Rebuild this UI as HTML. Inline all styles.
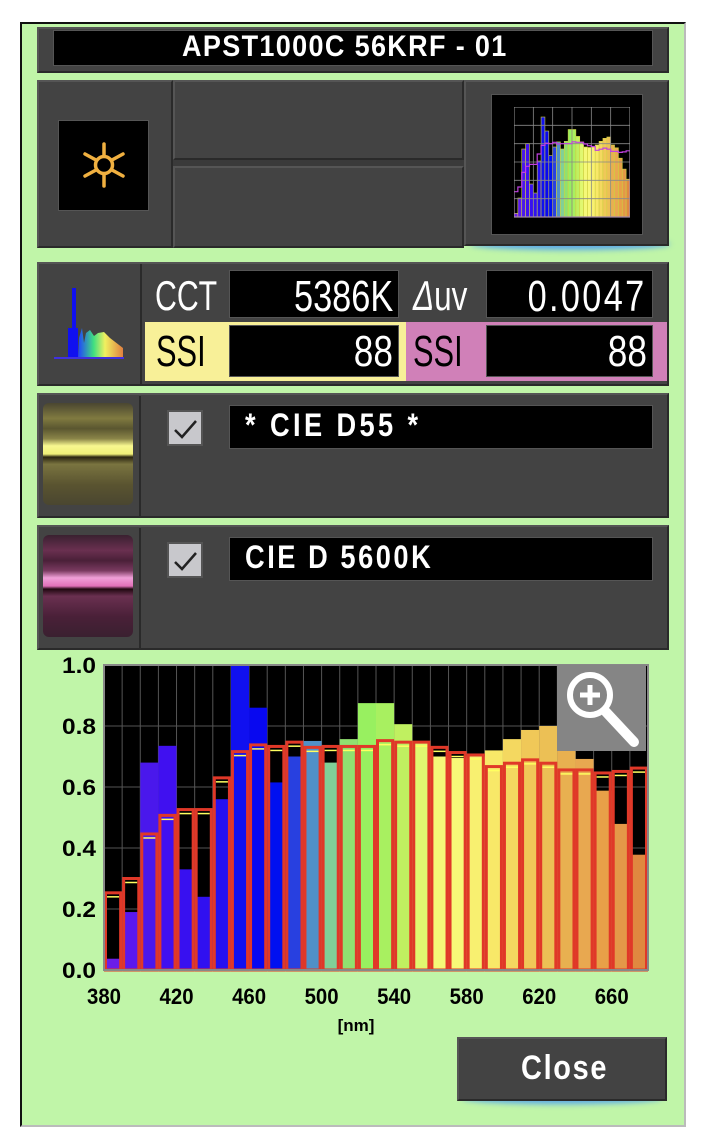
<!DOCTYPE html>
<html><head><meta charset="utf-8">
<style>
*{margin:0;padding:0;box-sizing:border-box}
body{width:702px;height:1148px;background:#fff;position:relative;overflow:hidden;font-family:"Liberation Sans",sans-serif}
.abs{position:absolute}
#panel{left:20px;top:22px;width:666px;height:1105px;background:#c0f5a8;border-left:2px solid #111;border-top:2px solid #111;border-right:2px solid #bbb;border-bottom:2px solid #bbb}
.dk{background:#434343;border:2px solid #2a2a2a;border-top-color:#555;border-left-color:#555}
.blk{background:#000;border:1px solid #555}
.t{color:#fff;font-weight:bold;white-space:nowrap;transform-origin:left center;display:inline-block}
.r{transform-origin:right center;text-align:right}
.cb{background:#c8c8cc;border:2px solid #555;width:36px;height:36px}
</style></head><body>
<div id="panel" class="abs"></div>

<!-- title -->
<div class="abs dk" style="left:37px;top:27px;width:632px;height:46px"></div>
<div class="abs blk" style="left:53px;top:30px;width:600px;height:36px"></div>
<div class="abs t" style="left:182px;top:30px;font-size:30px;letter-spacing:1.5px;transform:scaleX(0.9)">APST1000C 56KRF - 01</div>

<!-- section 2 -->
<div class="abs dk" style="left:37px;top:80px;width:136px;height:168px"></div>
<div class="abs blk" style="left:58px;top:120px;width:91px;height:91px"></div>
<svg class="abs" style="left:80px;top:141px" width="48" height="48" viewBox="0 0 48 48">
<g stroke="#f0b040" stroke-width="3.5" fill="none" stroke-linecap="round">
<circle cx="24" cy="24" r="8.5"/>
<line x1="24" y1="3" x2="24" y2="15"/><line x1="24" y1="33" x2="24" y2="45"/>
<line x1="5" y1="13" x2="16" y2="19"/><line x1="32" y1="29" x2="43" y2="35"/>
<line x1="5" y1="35" x2="16" y2="29"/><line x1="32" y1="19" x2="43" y2="13"/>
</g></svg>
<div class="abs" style="left:173px;top:80px;width:291px;height:168px;background:#3a3a3a"></div>
<div class="abs dk" style="left:173px;top:80px;width:291px;height:80px"></div>
<div class="abs dk" style="left:173px;top:166px;width:291px;height:82px"></div>
<div class="abs" style="left:470px;top:238px;width:200px;height:12px;background:#5aa8e8;border-radius:50%;filter:blur(3px)"></div>
<div class="abs dk" style="left:464px;top:80px;width:205px;height:166px"></div>
<div class="abs blk" style="left:491px;top:94px;width:152px;height:141px"></div>
<svg class="abs" style="left:514px;top:107px" width="116" height="112" id="mini"></svg>

<!-- section 3 -->
<div class="abs dk" style="left:37px;top:262px;width:632px;height:124px"></div>
<div class="abs" style="left:140px;top:264px;width:2px;height:120px;background:#2a2a2a"></div>
<svg class="abs" style="left:52px;top:288px" width="74" height="72" viewBox="0 0 74 72">
<defs><linearGradient id="sg" x1="0" x2="1"><stop offset="0" stop-color="#2040ff"/><stop offset=".35" stop-color="#40e080"/><stop offset=".6" stop-color="#f0f060"/><stop offset="1" stop-color="#e08040"/></linearGradient></defs>
<path d="M26 70 L27 50 L30 40 L32 55 L34 45 L38 42 L42 48 L46 45 L52 44 L58 50 L71 60 L71 70 Z" fill="url(#sg)"/>
<rect x="20" y="0" width="4" height="70" fill="#1010f0"/><rect x="16" y="40" width="10" height="30" fill="#1010f0"/>
<line x1="2" y1="70" x2="72" y2="70" stroke="#4030e0" stroke-width="2"/>
</svg>
<div class="abs t" style="left:155px;top:272px;font-size:42px;font-weight:normal;transform:scaleX(0.72)">CCT</div>
<div class="abs blk" style="left:229px;top:270px;width:170px;height:48px"></div>
<div class="abs t r" style="right:309px;top:272px;font-size:44px;font-weight:normal;transform:scaleX(0.78)">5386K</div>
<div class="abs t" style="left:413px;top:272px;font-size:42px;font-weight:normal;transform:scaleX(0.75)"><i>Δ</i>uv</div>
<div class="abs blk" style="left:486px;top:270px;width:167px;height:48px"></div>
<div class="abs t r" style="right:55px;top:272px;font-size:44px;font-weight:normal;letter-spacing:3px;transform:scaleX(0.78)">0.0047</div>
<div class="abs" style="left:145px;top:322px;width:261px;height:59px;background:#f8f098"></div>
<div class="abs" style="left:406px;top:322px;width:261px;height:59px;background:#d080b8"></div>
<div class="abs blk" style="left:229px;top:325px;width:170px;height:52px"></div>
<div class="abs blk" style="left:486px;top:325px;width:167px;height:52px"></div>
<div class="abs t" style="left:156px;top:327px;font-size:44px;font-weight:normal;color:#000;transform:scaleX(0.7)">SSI</div>
<div class="abs t" style="left:413px;top:327px;font-size:44px;font-weight:normal;color:#000;transform:scaleX(0.7)">SSI</div>
<div class="abs t r" style="right:309px;top:327px;font-size:44px;font-weight:normal;transform:scaleX(0.8)">88</div>
<div class="abs t r" style="right:55px;top:327px;font-size:44px;font-weight:normal;transform:scaleX(0.8)">88</div>

<!-- section 4 -->
<div class="abs dk" style="left:37px;top:393px;width:632px;height:125px"></div>
<div class="abs" style="left:139px;top:396px;width:2px;height:120px;background:#2a2a2a"></div>
<div class="abs" style="left:43px;top:403px;width:90px;height:102px;border-radius:6px;background:linear-gradient(#4a4630,#807a40 15%,#5a5630 25%,#8a8448 35%,#f8f890 42%,#f0f078 50%,#2a2410 53%,#7a7440 60%,#5a5430 80%,#4a4630)"></div>
<div class="abs cb" style="left:167px;top:410px"></div>
<svg class="abs" style="left:170px;top:414px" width="30" height="28"><path d="M5 16 L12 23 L26 7" stroke="#222" stroke-width="2.5" fill="none"/></svg>
<div class="abs blk" style="left:229px;top:405px;width:424px;height:44px"></div>
<div class="abs t" style="left:245px;top:407px;font-size:32px;letter-spacing:4px;transform:scaleX(0.85)">* CIE D55 *</div>

<!-- section 5 -->
<div class="abs dk" style="left:37px;top:525px;width:632px;height:125px"></div>
<div class="abs" style="left:139px;top:528px;width:2px;height:120px;background:#2a2a2a"></div>
<div class="abs" style="left:43px;top:535px;width:90px;height:102px;border-radius:6px;background:linear-gradient(#3a2030,#6a3050 15%,#4a2038 25%,#7a3a60 35%,#f0a0d8 42%,#e070b8 50%,#200810 53%,#6a3050 60%,#4a2038 80%,#3a2030)"></div>
<div class="abs cb" style="left:167px;top:542px"></div>
<svg class="abs" style="left:170px;top:546px" width="30" height="28"><path d="M5 16 L12 23 L26 7" stroke="#222" stroke-width="2.5" fill="none"/></svg>
<div class="abs blk" style="left:229px;top:537px;width:424px;height:44px"></div>
<div class="abs t" style="left:245px;top:539px;font-size:32px;letter-spacing:3px;transform:scaleX(0.85)">CIE D 5600K</div>

<!-- chart -->
<svg class="abs" style="left:0;top:650px" width="702" height="400" id="chart"></svg>

<!-- close -->
<div class="abs" style="left:462px;top:1092px;width:200px;height:12px;background:#5aa8e8;border-radius:50%;filter:blur(3px)"></div>
<div class="abs dk" style="left:457px;top:1037px;width:210px;height:64px"></div>
<div class="abs t" style="left:521px;top:1049px;font-size:34px;letter-spacing:2px;transform:scaleX(0.85)">Close</div>

<script>
var fill=[.037,.19,.68,.735,.33,.24,.56,1,.86,.615,.70,.751,.68,.757,.875,.875,.806,.751,.70,.695,.70,.72,.757,.787,.80,.72,.692,.588,.479,.378];
var red=[.253,.30,.446,.507,.526,.526,.63,.716,.738,.733,.747,.73,.733,.733,.733,.752,.747,.747,.73,.713,.705,.667,.678,.689,.678,.656,.656,.646,.651,.662];
var col=["#6a1ee8","#5a18ee","#4a18ec","#4010f0","#3810f0","#3010f0","#2510f0","#1010f0","#0808f0","#0010f0","#2840e0","#5090c8","#80d098","#90e070","#98f060","#a8f060","#c0f060","#e0f870","#f5f878","#f8f878","#f8f070","#f8e868","#f4d860","#f0c858","#ecc055","#e8b050","#e8a850","#e8a048","#e49848","#e08840"];
var X0=104,W=544,Y0=320,H=305,bw=W/30,s='';
s+='<rect x="'+X0+'" y="'+(Y0-H)+'" width="'+W+'" height="'+H+'" fill="#000"/>';
for(var i=1;i<30;i++)s+='<line x1="'+(X0+i*bw)+'" y1="'+(Y0-H)+'" x2="'+(X0+i*bw)+'" y2="'+Y0+'" stroke="#555" stroke-width="1"/>';
for(var j=1;j<5;j++)s+='<line x1="'+X0+'" y1="'+(Y0-j*H/5)+'" x2="'+(X0+W)+'" y2="'+(Y0-j*H/5)+'" stroke="#555" stroke-width="1"/>';
for(i=0;i<30;i++){var x=X0+i*bw;s+='<rect x="'+x+'" y="'+(Y0-fill[i]*H)+'" width="'+bw+'" height="'+fill[i]*H+'" fill="'+col[i]+'"/>';}
for(i=0;i<30;i++){var x=X0+i*bw,y=Y0-red[i]*H;
s+='<line x1="'+(x+3)+'" y1="'+(y+4)+'" x2="'+(x+bw-3)+'" y2="'+(y+4)+'" stroke="#ffff60" stroke-width="1.5"/>';
s+='<rect x="'+(x+1.5)+'" y="'+y+'" width="'+(bw-3)+'" height="'+(Y0-y)+'" fill="none" stroke="#e03828" stroke-width="3"/>';}
s+='<rect x="'+X0+'" y="'+(Y0-H)+'" width="'+W+'" height="'+H+'" fill="none" stroke="#888" stroke-width="2"/>';
s+='<rect x="557" y="15" width="89" height="86" fill="#858585"/>';
s+='<circle cx="590" cy="45" r="20" fill="none" stroke="#fff" stroke-width="6"/><line x1="580" y1="45" x2="600" y2="45" stroke="#fff" stroke-width="5"/><line x1="590" y1="35" x2="590" y2="55" stroke="#fff" stroke-width="5"/><line x1="606" y1="62" x2="634" y2="92" stroke="#fff" stroke-width="10" stroke-linecap="round"/>';
var yl=["0.0","0.2","0.4","0.6","0.8","1.0"];
for(j=0;j<6;j++)s+='<text x="96" y="'+(Y0-j*H/5+8)+'" text-anchor="end" font-family="Liberation Sans" font-weight="bold" font-size="22" fill="#000" textLength="34" lengthAdjust="spacingAndGlyphs">'+yl[j]+'</text>';
for(j=0;j<8;j++){var xx=X0+j*4*bw;s+='<text x="'+xx+'" y="'+(Y0+34)+'" text-anchor="middle" font-family="Liberation Sans" font-weight="bold" font-size="22" fill="#000" textLength="34" lengthAdjust="spacingAndGlyphs">'+(380+j*40)+'</text>';}
s+='<text x="356" y="'+(Y0+61)+'" text-anchor="middle" font-family="Liberation Sans" font-weight="bold" font-size="17" fill="#000">[nm]</text>';
document.getElementById('chart').innerHTML=s;
var m='',mw=116/30;
for(i=0;i<30;i++){var h=fill[i]*100;m+='<rect x="'+(i*mw)+'" y="'+(110-h)+'" width="'+mw+'" height="'+h+'" fill="'+col[i]+'" stroke="#d0d040" stroke-width=".6"/>';}
for(i=1;i<6;i++){m+='<line x1="'+(i*116/6)+'" y1="0" x2="'+(i*116/6)+'" y2="110" stroke="#888" stroke-width=".8"/><line x1="0" y1="'+(i*110/6)+'" x2="116" y2="'+(i*110/6)+'" stroke="#888" stroke-width=".8"/>';}
var p='M0 110';for(i=0;i<30;i++){p+=' L'+(i*mw)+' '+(110-red[i]*100)+' L'+((i+1)*mw)+' '+(110-red[i]*100);}p+=' L116 110 Z';
m+='<path d="'+p+'" fill="none" stroke="#c040e0" stroke-width="1.2"/>';
m+='<rect x="0" y="0" width="116" height="110" fill="none" stroke="#999"/>';
document.getElementById('mini').innerHTML=m;
</script>
</body></html>
